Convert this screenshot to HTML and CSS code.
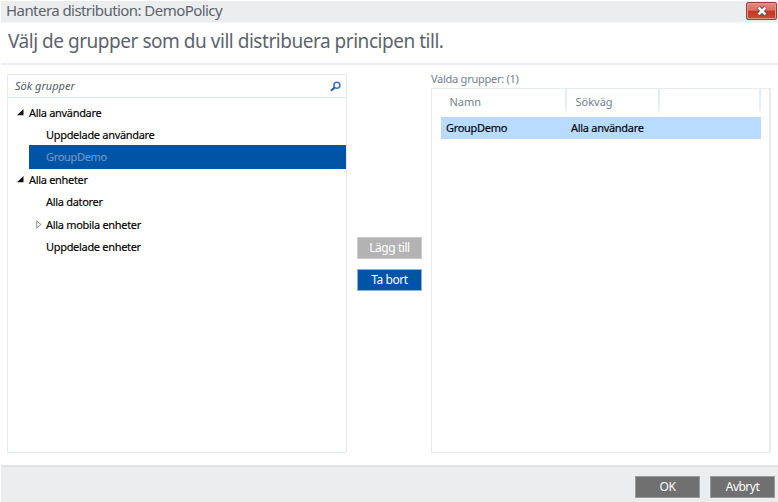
FILE: index.html
```html
<!DOCTYPE html>
<html lang="sv">
<head>
<meta charset="utf-8">
<title>Hantera distribution: DemoPolicy</title>
<link rel="stylesheet" href="styles.css">
</head>
<body>
<div class="dialog">
  <header class="titlebar">
    <span class="title">Hantera distribution: DemoPolicy</span>
    <button class="close" aria-label="Stäng"><svg width="12" height="10" viewBox="0 0 12 10"><path d="M2.6 1.6 9.4 8.4M9.4 1.6 2.6 8.4" stroke="#6b4550" stroke-width="4.2"/><path d="M2.6 1.6 9.4 8.4M9.4 1.6 2.6 8.4" stroke="#fff" stroke-width="2.6"/></svg></button>
  </header>
  <h1 class="heading">Välj de grupper som du vill distribuera principen till.</h1>
  <main class="content">
    <section class="groups">
      <div class="search">
        <span class="placeholder">Sök grupper</span>
        <svg width="12" height="11" viewBox="0 0 12 11" fill="none"><circle cx="7.9" cy="4.2" r="3" stroke="#3b74c0" stroke-width="1.6"/><path d="M5.6 6.4 2 9.8" stroke="#2c5dab" stroke-width="2.1"/></svg>
      </div>
      <ul class="tree">
        <li class="node"><svg class="arrow" width="7" height="7"><path d="M6.5 0v6.2H0z" fill="#111"/></svg><span>Alla användare</span></li>
        <li class="node child"><span>Uppdelade användare</span></li>
        <li class="node child selected"><span>GroupDemo</span></li>
        <li class="node"><svg class="arrow" width="7" height="7"><path d="M6.5 0v6.2H0z" fill="#111"/></svg><span>Alla enheter</span></li>
        <li class="node child"><span>Alla datorer</span></li>
        <li class="node child expandable"><svg class="arrow" width="6" height="9"><path d="M.7.9v7.2L5 4.5z" fill="#fff" stroke="#808080" stroke-width=".9"/></svg><span>Alla mobila enheter</span></li>
        <li class="node child"><span>Uppdelade enheter</span></li>
      </ul>
    </section>
    <div class="actions">
      <button class="btn disabled">Lägg till</button>
      <button class="btn primary">Ta bort</button>
    </div>
    <section class="chosen">
      <div class="caption">Valda grupper: (1)</div>
      <div class="table">
        <div class="thead"><div class="th">Namn</div><div class="th">Sökväg</div><div class="th"></div></div>
        <div class="row"><div class="td">GroupDemo</div><div class="td">Alla användare</div></div>
      </div>
    </section>
  </main>
  <footer class="footer">
    <button class="btn dark">OK</button>
    <button class="btn dark">Avbryt</button>
  </footer>
</div>
</body>
</html>
```
FILE: styles.css
```css
* { box-sizing: border-box; }
body { margin: 0; background: #fff; font: 11px/16px "Noto Sans", "Liberation Sans", sans-serif; color: #000; }
button { font: inherit; padding: 0; }
svg { display: block; flex: none; }
.dialog { width: 778px; height: 502px; padding: 1px 0 0 1px; display: flex; flex-direction: column; overflow: hidden; }
.titlebar { height: 22px; flex: none; background: #ebedee; border-bottom: 1px solid #f3f4f4; display: flex; justify-content: space-between; align-items: flex-start; padding: 1px 1px 0 5px; }
.title { font-size: 15px; line-height: 17px; letter-spacing: -0.56px; color: #5c646d; white-space: nowrap; }
.close { width: 31px; height: 18px; border: 1px solid #8e4541; border-radius: 2px; background: linear-gradient(#e78b80 0, #dc6a5d 46%, #c33620 50%, #cf4b36 100%); box-shadow: inset 0 0 0 1px #e0968c; display: flex; align-items: center; justify-content: center; }
.heading { height: 42px; flex: none; margin: 0; padding-left: 7px; border-bottom: 2px solid #ebeef3; font-weight: 400; font-size: 19px; line-height: 37px; letter-spacing: -0.47px; color: #5c646d; white-space: nowrap; }
.content { flex: 1; display: flex; padding: 9px 7px 12px 6px; }
.groups { width: 341px; border: 1px solid #e5eaeb; border-radius: 2px; border-bottom-color: #dce4e7; }
.search { height: 23px; border-bottom: 1px solid #dfe6e6; display: flex; align-items: center; justify-content: space-between; padding: 0 5px 0 7px; }
.placeholder { font-style: italic; color: #4f5963; }
.tree { list-style: none; margin: 0; padding: 3.6px 0 0; letter-spacing: -0.31px; -webkit-text-stroke: 0.15px; }
.node { height: 22.4px; display: flex; align-items: center; padding-left: 9px; white-space: nowrap; }
.node .arrow { margin-right: 5px; }
.child { margin-left: 21px; padding-left: 17px; }
.expandable { padding-left: 7px; }
.node.expandable .arrow { margin-right: 4px; }
.selected { height: 23.4px; margin-top: -1px; background: #0054a6; color: #7296cb; }
.actions { width: 84px; padding: 163px 9px 0 10px; display: flex; flex-direction: column; gap: 10px; }
.btn { width: 65px; height: 22px; border: 1px solid; color: #fff; font-size: 12px; line-height: 18px; text-align: center; letter-spacing: -0.5px; }
.actions .btn { letter-spacing: -0.45px; }
.disabled { background: #b3b3b3; border-color: #cbcbcb; }
.primary { background: #0054a6; border-color: #8cb0da; }
.chosen { width: 340px; display: flex; flex-direction: column; }
.caption { height: 14px; line-height: 10px; letter-spacing: -0.26px; color: #71808f; white-space: nowrap; }
.table { flex: 1; border: 1px solid #e6ebed; border-width: 1px 2px 1px 1px; padding: 0 8px 0 9px; }
.thead { display: flex; height: 28px; color: #71808f; }
.th { width: 126px; height: 24px; padding: 5px 0 0 8.5px; border-right: 2px solid; border-image: linear-gradient(#e2eaf4, #e9eff6 80%, #fff) 1; }
.th:nth-child(2) { width: 93px; }
.th:nth-child(3) { width: 101px; }
.row { display: flex; align-items: center; height: 22px; background: #b8dbff; letter-spacing: -0.29px; -webkit-text-stroke: 0.15px; }
.td { width: 125px; padding-left: 5px; white-space: nowrap; }
.footer { height: 37px; flex: none; background: #ebedef; border-top: 2px solid #e2e4e5; display: flex; justify-content: flex-end; gap: 10px; padding: 9px 3px 0 0; }
.dark { background: #707070; border-color: #9b9b9b; }
```
